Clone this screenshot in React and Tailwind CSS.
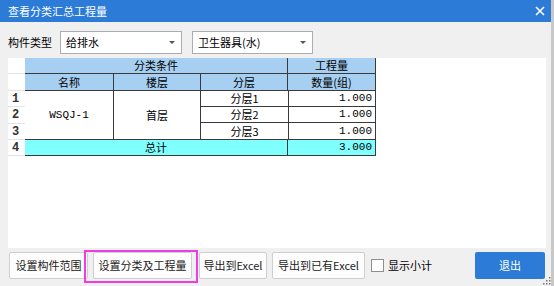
import React from "react";

const font = { fontFamily: '"Microsoft YaHei", "Noto Sans CJK SC", "Noto Sans", sans-serif' };
const mono = { fontFamily: '"Liberation Mono", "Noto Sans CJK SC", monospace' };

function Combo({ w, text }) {
  return (
    <div className={`${w} shrink-0 h-[23px] bg-white border border-[#abadb3] flex items-center justify-between pl-[5px] pr-[6px]`}>
      <span className="text-[11px] text-black leading-none whitespace-nowrap">{text}</span>
      <svg width="6" height="4" viewBox="0 0 6 4"><path d="M0 0 L6 0 L3 3 Z" fill="#555" /></svg>
    </div>
  );
}

function Btn({ children, w, className = "" }) {
  return (
    <div className={`${w} shrink-0 h-[27px] bg-[#fdfdfd] border border-[#cfcfcf] rounded-[2px] flex items-center justify-center text-[11px] text-[#222] whitespace-nowrap ${className}`}>
      {children}
    </div>
  );
}

export default function App() {
  const dark = "border-[#3a3a3a]";
  return (
    <div className="w-[554px] h-[286px] bg-[#f0f0f0] flex flex-col relative overflow-hidden border-r-[3px] border-[#c8c8c8]" style={font}>
      <div className="h-[22px] bg-[#2b7bd7] flex items-center justify-between pl-[8px] pr-[6px] shrink-0">
        <span className="text-white text-[11px] leading-none">查看分类汇总工程量</span>
        <svg width="10" height="10" viewBox="0 0 10 10"><path d="M1 1 L9 9 M9 1 L1 9" stroke="white" strokeWidth="1.6" /></svg>
      </div>
      <div className="flex items-center mt-[9px] pl-[8px] h-[23px]">
        <span className="text-[11px] text-black w-[52px] shrink-0">构件类型</span>
        <Combo w="w-[122px]" text="给排水" />
        <div className="w-[10px] shrink-0" />
        <Combo w="w-[121px]" text="卫生器具(水)" />
      </div>
      <div className="ml-[8px] mt-[4px] w-[538px] h-[190px] bg-white shrink-0">
        <div className="flex text-[11px] text-black">
          <div className="w-[17px] flex flex-col">
            <div className="h-[16px] border-b border-[#e4e4e4] bg-white" />
            <div className="h-[17px] border-b border-[#e4e4e4] bg-white" />
            {["1", "2", "3", "4"].map((n, i) => (
              <div key={n} className={`${i === 1 ? "h-[17px]" : "h-[16px]"} border-b border-[#e4e4e4] flex items-center pl-[4px] text-[12px] font-bold text-[#333] leading-none`} style={mono}>
                {n}
              </div>
            ))}
          </div>
          <div className="flex flex-col w-[351px]">
            <div className={`flex h-[16px] bg-[#a6cff2] border-b ${dark}`}>
              <div className="w-[262px] flex items-center justify-center leading-none">分类条件</div>
              <div className={`w-[89px] border-l border-r ${dark} flex items-center justify-center leading-none`}>工程量</div>
            </div>
            <div className={`flex h-[17px] bg-[#a6cff2] border-b ${dark}`}>
              <div className={`w-[88px] flex items-center justify-center leading-none`}>名称</div>
              <div className={`w-[87px] border-l ${dark} flex items-center justify-center leading-none`}>楼层</div>
              <div className={`w-[87px] border-l ${dark} flex items-center justify-center leading-none`}>分层</div>
              <div className={`w-[89px] border-l border-r ${dark} flex items-center justify-center leading-none`}>数量(组)</div>
            </div>
            <div className={`flex h-[49px] border-b ${dark}`}>
              <div className="w-[88px] flex items-center justify-center text-[11px] leading-none" style={mono}>WSQJ-1</div>
              <div className={`w-[87px] border-l ${dark} flex items-center justify-center leading-none`}>首层</div>
              <div className={`w-[176px] border-l border-r ${dark} flex flex-col`}>
                {["分层1", "分层2", "分层3"].map((t, i) => (
                  <div key={t} className={`flex ${i === 1 ? "h-[17px]" : "h-[16px]"} ${i < 2 ? `border-b ${dark}` : ""}`}>
                    <div className="w-[87px] flex items-center justify-center leading-none">{t}</div>
                    <div className={`w-[87px] border-l ${dark} flex items-center justify-end pr-[3px] text-[11px] leading-none`} style={mono}>1.000</div>
                  </div>
                ))}
              </div>
            </div>
            <div className={`flex h-[16px] bg-[#80ffff] border-b ${dark}`}>
              <div className="w-[262px] flex items-center justify-center leading-none">总计</div>
              <div className={`w-[89px] border-l border-r ${dark} flex items-center justify-end pr-[3px] text-[11px] leading-none`} style={mono}>3.000</div>
            </div>
          </div>
        </div>
      </div>
      <div className="flex items-center mt-[4px] pl-[9px] pr-[6px] h-[27px]">
        <Btn w="w-[79px]">设置构件范围</Btn>
        <div className="relative ml-[5px] shrink-0">
          <Btn w="w-[99px]">设置分类及工程量</Btn>
          <div className="absolute left-[-9px] top-[-2px] w-[114px] h-[33px] border-2 border-[#f03ce6] pointer-events-none" />
        </div>
        <Btn w="w-[68px]" className="ml-[7px]">导出到Excel</Btn>
        <Btn w="w-[93px]" className="ml-[5px]">导出到已有Excel</Btn>
        <div className="ml-[6px] w-[13px] h-[13px] shrink-0 bg-white border border-[#8f8f8f]" />
        <span className="ml-[4px] text-[11px] text-black whitespace-nowrap">显示小计</span>
        <div className="ml-auto w-[70px] h-[27px] shrink-0 bg-[#2b7bd7] rounded-[2px] flex items-center justify-center text-white text-[11px]">退出</div>
      </div>
      <svg className="absolute right-[0px] bottom-[1px]" width="8" height="8" viewBox="0 0 8 8">
        <rect x="6" y="0" width="1.5" height="1.5" fill="#777" />
        <rect x="3" y="3" width="1.5" height="1.5" fill="#777" />
        <rect x="6" y="3" width="1.5" height="1.5" fill="#777" />
        <rect x="0" y="6" width="1.5" height="1.5" fill="#777" />
        <rect x="3" y="6" width="1.5" height="1.5" fill="#777" />
        <rect x="6" y="6" width="1.5" height="1.5" fill="#777" />
      </svg>
    </div>
  );
}
